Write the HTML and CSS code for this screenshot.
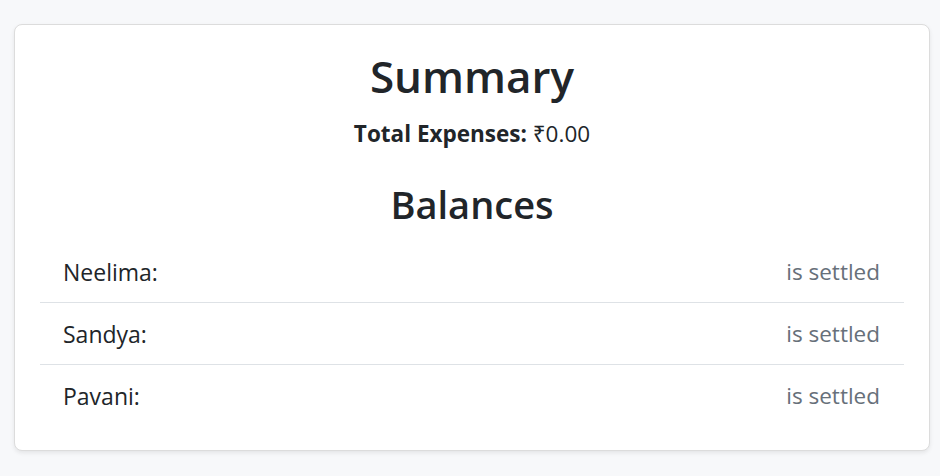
FILE: index.html
```html
<!DOCTYPE html>
<html lang="en">
<head>
<meta charset="utf-8">
<title>Summary</title>
<link rel="stylesheet" href="styles.css">
</head>
<body>
<div class="card">
  <h1 class="title">Summary</h1>
  <p class="total"><strong>Total Expenses:</strong> ₹0.00</p>
  <h2 class="subtitle">Balances</h2>
  <ul class="list">
    <li class="row"><span class="name">Neelima:</span><span class="status">is settled</span></li>
    <li class="row"><span class="name">Sandya:</span><span class="status">is settled</span></li>
    <li class="row"><span class="name">Pavani:</span><span class="status">is settled</span></li>
  </ul>
</div>
</body>
</html>
```
FILE: styles.css
```css
html, body {
  margin: 0;
  padding: 0;
}
body {
  background: #f7f8fa;
  font-family: "Open Sans", "Noto Sans", sans-serif;
  color: #212529;
  padding: 24px 10px 26px 14px;
}
.card {
  background: #fff;
  border: 1px solid #dcdcdc;
  border-radius: 8px;
  box-shadow: 0 2px 4px rgba(0, 0, 0, 0.08);
  padding: 25px 25px 24px;
  text-align: center;
}
.title {
  font-size: 44px;
  font-weight: 600;
  line-height: 52.8px;
  margin: 0 0 14.7px;
}
.total {
  font-size: 22.5px;
  line-height: 33.75px;
  margin: 0 0 30.3px;
}
.total strong {
  font-weight: 700;
}
.subtitle {
  font-size: 38px;
  font-weight: 600;
  line-height: 45.6px;
  margin: 0 0 13.8px;
}
.list {
  list-style: none;
  margin: 0;
  padding: 0;
  text-align: left;
}
.row {
  display: flex;
  justify-content: space-between;
  align-items: center;
  padding: 13px 24px 12px 23px;
  font-size: 23px;
  line-height: 36px;
  border-bottom: 1px solid #dee2e6;
}
.row:last-child {
  border-bottom: none;
}
.status {
  color: #67707a;
  font-size: 22.5px;
}
```
